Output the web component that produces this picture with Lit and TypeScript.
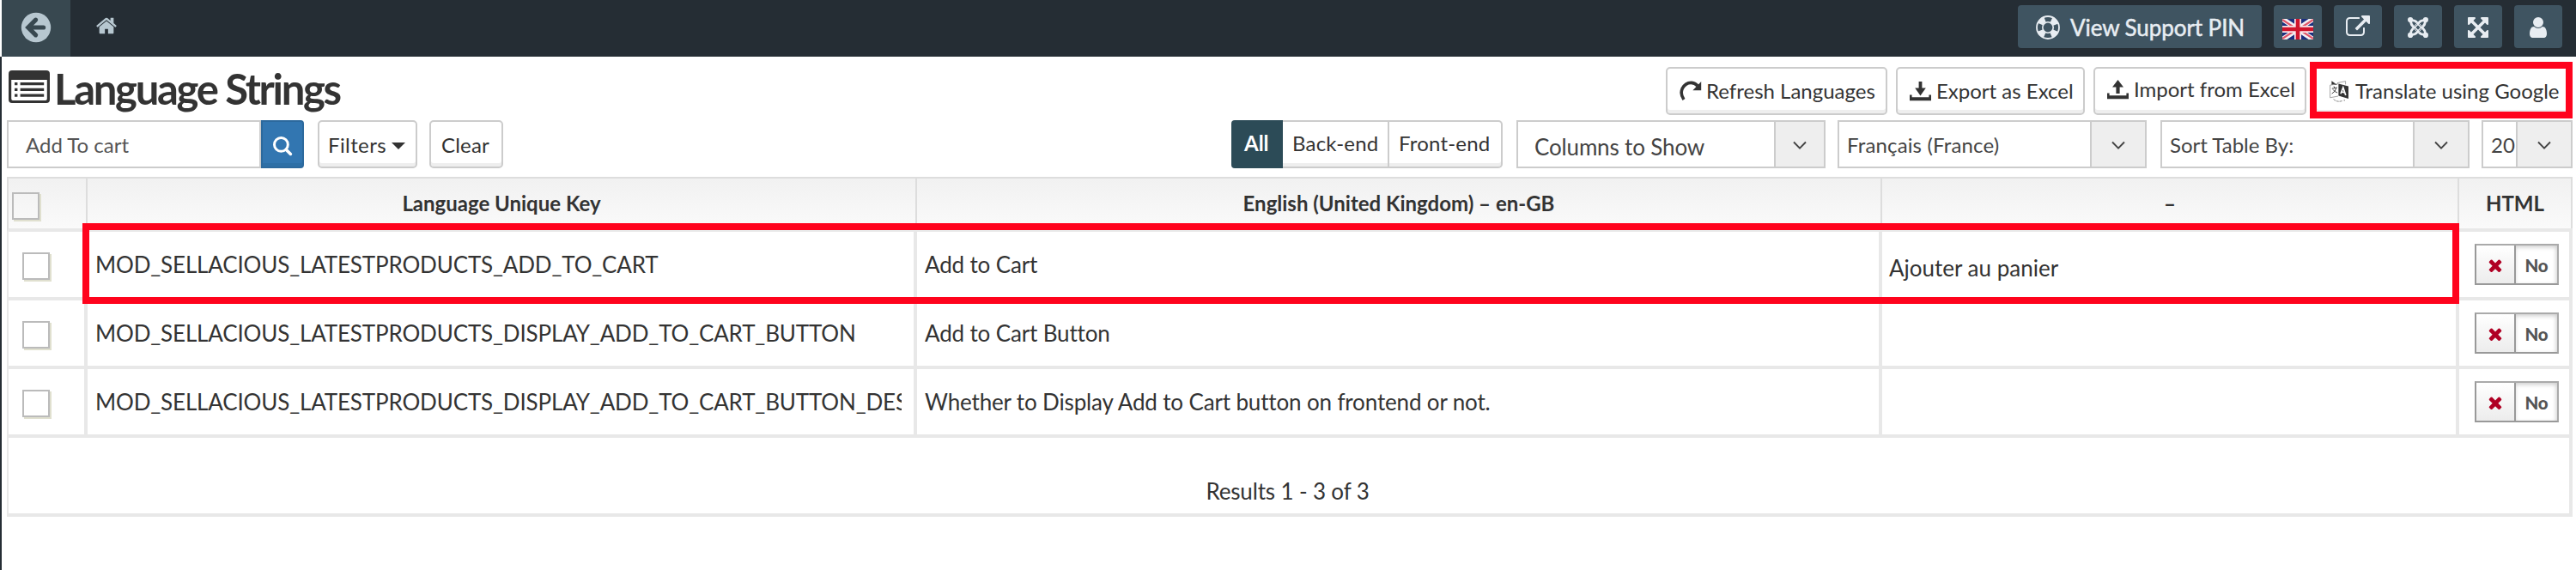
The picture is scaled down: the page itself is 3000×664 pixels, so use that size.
import { LitElement, html, svg, css } from "lit";
import { customElement } from "lit/decorators.js";

const rows = [
  { key: "MOD_SELLACIOUS_LATESTPRODUCTS_ADD_TO_CART", en: "Add to Cart", tr: "Ajouter au panier", mark: true },
  { key: "MOD_SELLACIOUS_LATESTPRODUCTS_DISPLAY_ADD_TO_CART_BUTTON", en: "Add to Cart Button", tr: "", mark: false },
  { key: "MOD_SELLACIOUS_LATESTPRODUCTS_DISPLAY_ADD_TO_CART_BUTTON_DES", en: "Whether to Display Add to Cart button on frontend or not.", tr: "", mark: false },
];

const fa = (d: string, w: number, h: number) => html`<svg width=${w} height=${h} viewBox="0 0 1792 1792"><path fill="currentColor" d=${d} /></svg>`;

const HOME = "M1472 992v480q0 26-19 45t-45 19h-384v-384h-256v384h-384q-26 0-45-19t-19-45v-480q0-1 .5-3t.5-3l575-474 575 474q1 2 1 6zm223-69l-62 74q-8 9-21 11h-3q-13 0-21-7l-692-577-692 577q-12 8-24 7-13-2-21-11l-62-74q-8-10-7-23.5t11-21.5l719-599q32-26 76-26t76 26l244 204v-195q0-14 9-23t23-9h192q14 0 23 9t9 23v408l219 182q10 8 11 21.5t-7 23.5z";
const USER = "M1536 1399q0 109-62.5 187t-150.5 78h-854q-88 0-150.5-78t-62.5-187q0-85 8.5-160.5t31.5-152 58.5-131 94-89 134.5-34.5q131 128 313 128t313-128q76 0 134.5 34.5t94 89 58.5 131 31.5 152 8.5 160.5zm-256-887q0 159-112.5 271.5t-271.5 112.5-271.5-112.5-112.5-271.5 112.5-271.5 271.5-112.5 271.5 112.5 112.5 271.5z";
const EXPAND = "M1411 541l-355 355 355 355 144-144q29-31 70-14 39 17 39 59v448q0 26-19 45t-45 19h-448q-42 0-59-40-17-39 14-69l144-144-355-355-355 355 144 144q31 30 14 69-17 40-59 40h-448q-26 0-45-19t-19-45v-448q0-42 40-59 39-17 69 14l144 144 355-355-355-355-144 144q-19 19-45 19-12 0-24-5-40-17-40-59v-448q0-26 19-45t45-19h448q42 0 59 40 17 39-14 69l-144 144 355 355 355-355-144-144q-31-30-14-69 17-40 59-40h448q26 0 45 19t19 45v448q0 42-39 59-13 5-25 5-26 0-45-19z";
const EXTERNAL = "M1408 928v320q0 119-84.5 203.5t-203.5 84.5h-832q-119 0-203.5-84.5t-84.5-203.5v-832q0-119 84.5-203.5t203.5-84.5h704q14 0 23 9t9 23v64q0 14-9 23t-23 9h-704q-66 0-113 47t-47 113v832q0 66 47 113t113 47h832q66 0 113-47t47-113v-320q0-14 9-23t23-9h64q14 0 23 9t9 23zm384-864v512q0 26-19 45t-45 19-45-19l-176-176-652 652q-10 10-23 10t-23-10l-114-114q-10-10-10-23t10-23l652-652-176-176q-19-19-19-45t19-45 45-19h512q26 0 45 19t19 45z";
const TIMES = "M1490 1322q0 40-28 68l-136 136q-28 28-68 28t-68-28l-294-294-294 294q-28 28-68 28t-68-28l-136-136q-28-28-28-68t28-68l294-294-294-294q-28-28-28-68t28-68l136-136q28-28 68-28t68 28l294 294 294-294q28-28 68-28t68 28l136 136q28 28 28 68t-28 68l-294 294 294 294q28 28 28 68z";

const backIcon = html`<svg width="36" height="36" viewBox="0 0 36 36">
  <circle cx="18" cy="18" r="17.2" fill="#b7c7d0" />
  <path d="M17.6 9.2 L8.8 18 L17.6 26.8 M10 18 H26.6" fill="none" stroke="#384850" stroke-width="5.2" stroke-linecap="round" stroke-linejoin="miter" />
</svg>`;

const listIcon = html`<svg width="48" height="38" viewBox="0 0 48 38">
  <path fill="#333" fill-rule="evenodd" d="M4 0H44Q48 0 48 4V34Q48 38 44 38H4Q0 38 0 34V4Q0 0 4 0ZM3.2 11V33Q3.2 35 5 35H43Q44.8 35 44.8 33V11Z" />
  <path fill="#333" d="M7 14h3.4v3.2H7zM7 20.8h3.4V24H7zM7 27.6h3.4v3.2H7zM13.6 14h27.6v3.2H13.6zM13.6 20.8h27.6V24H13.6zM13.6 27.6h27.6v3.2H13.6z" />
</svg>`;

const ringIcon = html`<svg width="28" height="28" viewBox="0 0 28 28">
  <circle cx="14" cy="14" r="13" fill="none" stroke="#e8edf2" stroke-width="1.8" />
  <circle cx="14" cy="14" r="6.2" fill="none" stroke="#e8edf2" stroke-width="1.6" />
  <circle cx="14" cy="14" r="9.8" fill="none" stroke="#e8edf2" stroke-width="6.4" stroke-dasharray="7.7 7.69" stroke-dashoffset="-3.85" />
</svg>`;

const flagIcon = html`<svg width="36" height="24" viewBox="0 0 36 24">
  <rect width="36" height="24" fill="#1b2f7e" />
  <path d="M0 0L36 24M36 0L0 24" stroke="#f3f0f2" stroke-width="6" />
  <path d="M0 1L17 12M36 1L19 12M0 23L17 12M36 23L19 12" stroke="#e0566a" stroke-width="2.2" />
  <path d="M18 0V24M0 12H36" stroke="#f8e6ea" stroke-width="8" />
  <path d="M18 0V24M0 12H36" stroke="#d0142c" stroke-width="4.6" />
</svg>`;

const joomlaIcon = html`<svg width="24" height="24" viewBox="0 0 24 24" fill="none" stroke="#e8edf2">
  <g fill="#e8edf2" stroke="none"><circle cx="3.1" cy="3.1" r="3.1" /><circle cx="20.9" cy="3.1" r="3.1" /><circle cx="3.1" cy="20.9" r="3.1" /><circle cx="20.9" cy="20.9" r="3.1" /></g>
  <g stroke-width="2.8">
    <path d="M3.6 4Q3.4 8.4 6.4 11L13 17.6" /><path d="M20 3.6Q15.6 3.4 13 6.4L6.4 13" />
    <path d="M20.4 20Q20.6 15.6 17.6 13L11 6.4" /><path d="M4 20.4Q8.4 20.6 11 17.6L17.6 11" />
    <path d="M4 3.6Q8.4 3.4 11 6.4M20.4 4Q20.6 8.4 17.6 11M20 20.4Q15.6 20.6 13 17.6M3.6 20Q3.4 15.6 6.4 13" />
  </g>
  <g stroke="#3f5461" stroke-width=".8"><path d="M13.2 8.2L15.8 10.8M15.8 13.2L13.2 15.8M10.8 15.8L8.2 13.2M8.2 10.8L10.8 8.2" /></g>
</svg>`;

const searchIcon = html`<svg width="24" height="24" viewBox="0 0 24 24" fill="none" stroke="#fff">
  <circle cx="10.4" cy="10.4" r="7.9" stroke-width="3" /><path d="M16.4 16.4L21.4 21.4" stroke-width="3.6" stroke-linecap="round" />
</svg>`;

const refreshIcon = html`<svg width="26" height="24" viewBox="0 0 26 24">
  <path d="M5 22Q.4 15.4 3.2 9.2Q6.8 2.4 13.4 2.4Q17.6 2.4 21 6" fill="none" stroke="#333" stroke-width="3.6" />
  <path d="M25.2 1V11.2H15.4Z" fill="#333" />
</svg>`;

const trayIcon = (up: boolean) => html`<svg width="25" height="23" viewBox="0 0 25 23" fill="#333">
  ${up ? svg`<path d="M12.5 0L19 8.6H14.6V16H10.4V8.6H6Z" />` : svg`<path d="M10.6 0H14.4V7.4H18.8L12.5 16.6L6.2 7.4H10.6Z" />`}
  <path d="M0 15.4H2.6V18.2H22.4V15.4H25V22.2H0Z" />
</svg>`;

const translateIcon = html`<svg width="22" height="25" viewBox="0 0 22 25">
  <path d="M2.4 0.3L9 5H2.4Z" fill="#333" />
  <path d="M9 2.6L18.6 .6V4.4M.6 5.2V19.8L10 18" fill="none" stroke="#999" stroke-width=".9" />
  <path d="M.6 5.2L10 3.6" stroke="#999" stroke-width=".9" />
  <path d="M2.8 9.2L8.8 8M5 6.6L6 8.4M7.8 8.4Q7 12.6 2.6 15.2M4 10.4Q6 13.2 9.2 14" fill="none" stroke="#444" stroke-width="1" />
  <path d="M10.4 3.4L22 6.4V21L10.4 17.6Z" fill="#333" />
  <path d="M13 15.2L15.8 8L18.8 17M14 13L17.8 13.8" fill="none" stroke="#fff" stroke-width="1.7" />
  <path d="M4.6 21.6Q9 25.6 15 23.4M17.2 22V23.6" fill="none" stroke="#777" stroke-width=".9" stroke-dasharray="3 .8" />
</svg>`;

const chevron = html`<svg width="18" height="11" viewBox="0 0 18 11"><path d="M2 1.5L9 8.6L16 1.5" fill="none" stroke="#444" stroke-width="1.9" /></svg>`;

@customElement("lang-select")
class LangSelect extends LitElement {
  static properties = { label: {} };
  declare label: string;
  static styles = css`
    :host { display: flex; box-sizing: border-box; height: 56px; border: 2px solid #ccc; background: #fff; color: #444; white-space: nowrap; }
    .label { flex: 1; min-width: 0; display: flex; align-items: center; padding: var(--pt, 2px) 0 0 var(--pl, 9px); }
    .arrow { flex: none; box-sizing: border-box; width: var(--aw, 64px); border-left: 2px solid #ccc; background: #eee; display: flex; align-items: center; justify-content: center; padding-top: 2px; }
  `;
  render() {
    return html`<span class="label">${this.label}</span><span class="arrow">${chevron}</span>`;
  }
}

@customElement("app-root")
class AppRoot extends LitElement {
  static styles = css`
    :host { display: block; width: 3000px; height: 664px; overflow: hidden; background: #fff; font-family: Lato, sans-serif; font-size: 26px; line-height: 32px; color: #333; white-space: nowrap; }
    * { box-sizing: border-box; }
    svg { display: block; flex: none; }
    .top { display: flex; height: 66px; margin-left: 2px; background: #252d34; color: #b7c7d0; }
    .back { width: 80px; background: #384850; display: flex; justify-content: center; padding-top: 14px; }
    .home { padding: 17px 0 0 29px; flex: 1; }
    .acts { display: flex; gap: 14px; padding: 6px 16px 0 0; color: #e8edf2; }
    .act { width: 56px; height: 50px; border-radius: 4px; background: #3f5461; display: flex; align-items: center; justify-content: center; padding-top: 2px; }
    .flag { padding-top: 6px; }
    .ext { padding-top: 0; }
    .pin { width: 284px; justify-content: flex-start; padding: 2px 0 0 21px; gap: 12px; -webkit-text-stroke: .5px #e8edf2; letter-spacing: -.08px; }
    .main { height: 598px; border-left: 2px solid #252d34; padding: 12px 4px 0 6px; }
    .titlebar { display: flex; justify-content: space-between; height: 56px; }
    h1 { margin: 0; display: flex; align-items: flex-start; gap: 5px; padding: 1px 0 0 2px; font-size: 49px; line-height: 48px; font-weight: 700; letter-spacing: -2.3px; }
    h1 svg { margin-top: 3px; }
    .buttons { display: flex; gap: 10px; font-size: 24px; }
    .btn { height: 56px; border: 2px solid #ccc; border-radius: 5px; background: #fff; box-shadow: inset 0 -4px 0 #eee; display: flex; align-items: center; justify-content: flex-start; }
    .refresh { width: 258px; padding-left: 14px; gap: 5px; }
    .export { width: 220px; padding-left: 14px; gap: 6px; }
    .import { width: 248px; padding: 0 0 4px 14px; gap: 6px; }
    .google { position: relative; width: 300px; padding-left: 15px; gap: 8px; border-color: #fff; margin-right: 0; }
    .google::after { content: ""; position: absolute; inset: -8px -2px -6px -8px; border: 8px solid #ff031d; }
    .bar { display: flex; height: 56px; margin-top: 6px; font-size: 24px; }
    .search { width: 296px; border: 2px solid #ccc; color: #555; display: flex; align-items: center; padding: 2px 0 0 20px; }
    .go { width: 50px; border: 2px solid #2c699d; background: #3276b1; box-shadow: inset 0 -4px 0 #2d6fa6; border-radius: 0 4px 4px 0; display: flex; align-items: center; justify-content: center; padding-top: 4px; }
    .filters { width: 116px; margin-left: 16px; padding: 2px 0 0 10px; gap: 6px; letter-spacing: .4px; }
    .caret { border: 8px solid transparent; border-top: 8px solid #333; border-bottom: 0; margin-top: 2px; }
    .clear { width: 86px; margin-left: 14px; padding: 2px 0 0 12px; letter-spacing: .2px; }
    .seg { display: flex; margin-left: auto; width: 316px; }
    .seg .btn { border-radius: 0; border-left-width: 0; padding: 0 0 2px 11px; letter-spacing: .2px; }
    .seg .all { width: 60px; border: 0; border-radius: 4px 0 0 4px; background: #2c4b57; box-shadow: none; color: #fff; font-weight: 700; padding-left: 15px; letter-spacing: 0; }
    .seg .be { width: 124px; }
    .seg .fe { flex: 1; border-radius: 0 5px 5px 0; }
    .cols { width: 360px; margin-left: 16px; font-size: 26px; letter-spacing: -.15px; --aw: 58px; --pl: 19px; --pt: 6px; }
    .lang { width: 360px; margin-left: 14px; letter-spacing: .15px; }
    .sort { width: 360px; margin-left: 16px; }
    .num { width: 106px; margin-left: 14px; }
    .table { margin-top: 10px; border-left: 2px solid #e8e8e8; letter-spacing: -.15px; }
    .row { position: relative; display: grid; grid-template-columns: 92px 966px 1124px 672px 1fr; height: 80px; border-bottom: 4px solid #e8e8e8; }
    .head { height: 64px; margin-left: -2px; border-top: 2px solid #ddd; border-left: 2px solid #ddd; background: linear-gradient(#f1f1f1, #fafafa); font-size: 24px; font-weight: 700; letter-spacing: 0; }
    .cell { min-width: 0; border-right: 4px solid #e8e8e8; display: flex; align-items: center; padding: 0 14px 0 9px; }
    .text { overflow: hidden; flex: 1; }
    .head .cell { border-right: 2px solid #ddd; justify-content: center; padding: 0; }
    .row .pick { align-items: flex-start; padding: 24px 0 0 16px; }
    .head .pick { justify-content: flex-start; padding: 16px 0 0 4px; }
    .box { width: 32px; height: 32px; border: 2px solid #bbb; box-shadow: 2px 2px 0 #e0e0cf; }
    .row .tr { padding: 8px 0 0 8px; letter-spacing: 0; }
    .mark { position: absolute; left: 86px; top: -10px; width: 2768px; height: 94px; border: 8px solid #ff031d; z-index: 1; }
    .sw { flex: none; display: flex; width: 98px; height: 48px; border: 2px solid #aaa; border-color: #aaa #aaa #999 #999; margin-left: 9px; }
    .x { width: 46px; border-right: 2px solid #999; background: linear-gradient(#fff, #ececec); display: flex; align-items: center; justify-content: center; padding-top: 2px; color: #b00024; }
    .no { flex: 1; display: flex; align-items: center; justify-content: center; font-size: 20.5px; font-weight: 900; color: #555; box-shadow: inset -1px 2px 5px rgba(0,0,0,.2); padding-top: 1px; }
    .foot { height: 92px; border: 0 solid #e8e8e8; border-width: 0 4px 4px 0; display: flex; align-items: center; justify-content: center; padding: 36px 3px 0 0; }
  `;

  render() {
    return html`
      <div class="top">
        <div class="back">${backIcon}</div>
        <div class="home">${fa(HOME, 26, 26)}</div>
        <div class="acts">
          <div class="act pin">${ringIcon}<span>View Support PIN</span></div>
          <div class="act flag">${flagIcon}</div>
          <div class="act">${fa(EXTERNAL, 28, 28)}</div>
          <div class="act">${joomlaIcon}</div>
          <div class="act">${fa(EXPAND, 28, 28)}</div>
          <div class="act">${fa(USER, 28, 28)}</div>
        </div>
      </div>
      <div class="main">
        <div class="titlebar">
          <h1>${listIcon}<span>Language Strings</span></h1>
          <div class="buttons">
            <div class="btn refresh">${refreshIcon}<span>Refresh Languages</span></div>
            <div class="btn export">${trayIcon(false)}<span>Export as Excel</span></div>
            <div class="btn import">${trayIcon(true)}<span>Import from Excel</span></div>
            <div class="btn google">${translateIcon}<span>Translate using Google</span></div>
          </div>
        </div>
        <div class="bar">
          <div class="search">Add To cart</div>
          <div class="go">${searchIcon}</div>
          <div class="btn filters"><span>Filters</span><span class="caret"></span></div>
          <div class="btn clear">Clear</div>
          <div class="seg">
            <div class="btn all">All</div>
            <div class="btn be">Back-end</div>
            <div class="btn fe">Front-end</div>
          </div>
          <lang-select class="cols" label="Columns to Show"></lang-select>
          <lang-select class="lang" label="Français (France)"></lang-select>
          <lang-select class="sort" label="Sort Table By:"></lang-select>
          <lang-select class="num" label="20"></lang-select>
        </div>
        <div class="table">
          <div class="row head">
            <div class="cell pick"><span class="box"></span></div>
            <div class="cell">Language Unique Key</div>
            <div class="cell">English (United Kingdom) – en-GB</div>
            <div class="cell">–</div>
            <div class="cell">HTML</div>
          </div>
          ${rows.map((r) => html`
            <div class="row">
              <div class="cell pick"><span class="box"></span></div>
              <div class="cell"><span class="text">${r.key}</span></div>
              <div class="cell"><span class="text">${r.en}</span></div>
              <div class="cell tr">${r.tr}</div>
              <div class="cell"><div class="sw"><span class="x">${fa(TIMES, 22, 22)}</span><span class="no">No</span></div></div>
              ${r.mark ? html`<div class="mark"></div>` : ""}
            </div>`)}
          <div class="foot">Results 1 - 3 of 3</div>
        </div>
      </div>
    `;
  }
}
